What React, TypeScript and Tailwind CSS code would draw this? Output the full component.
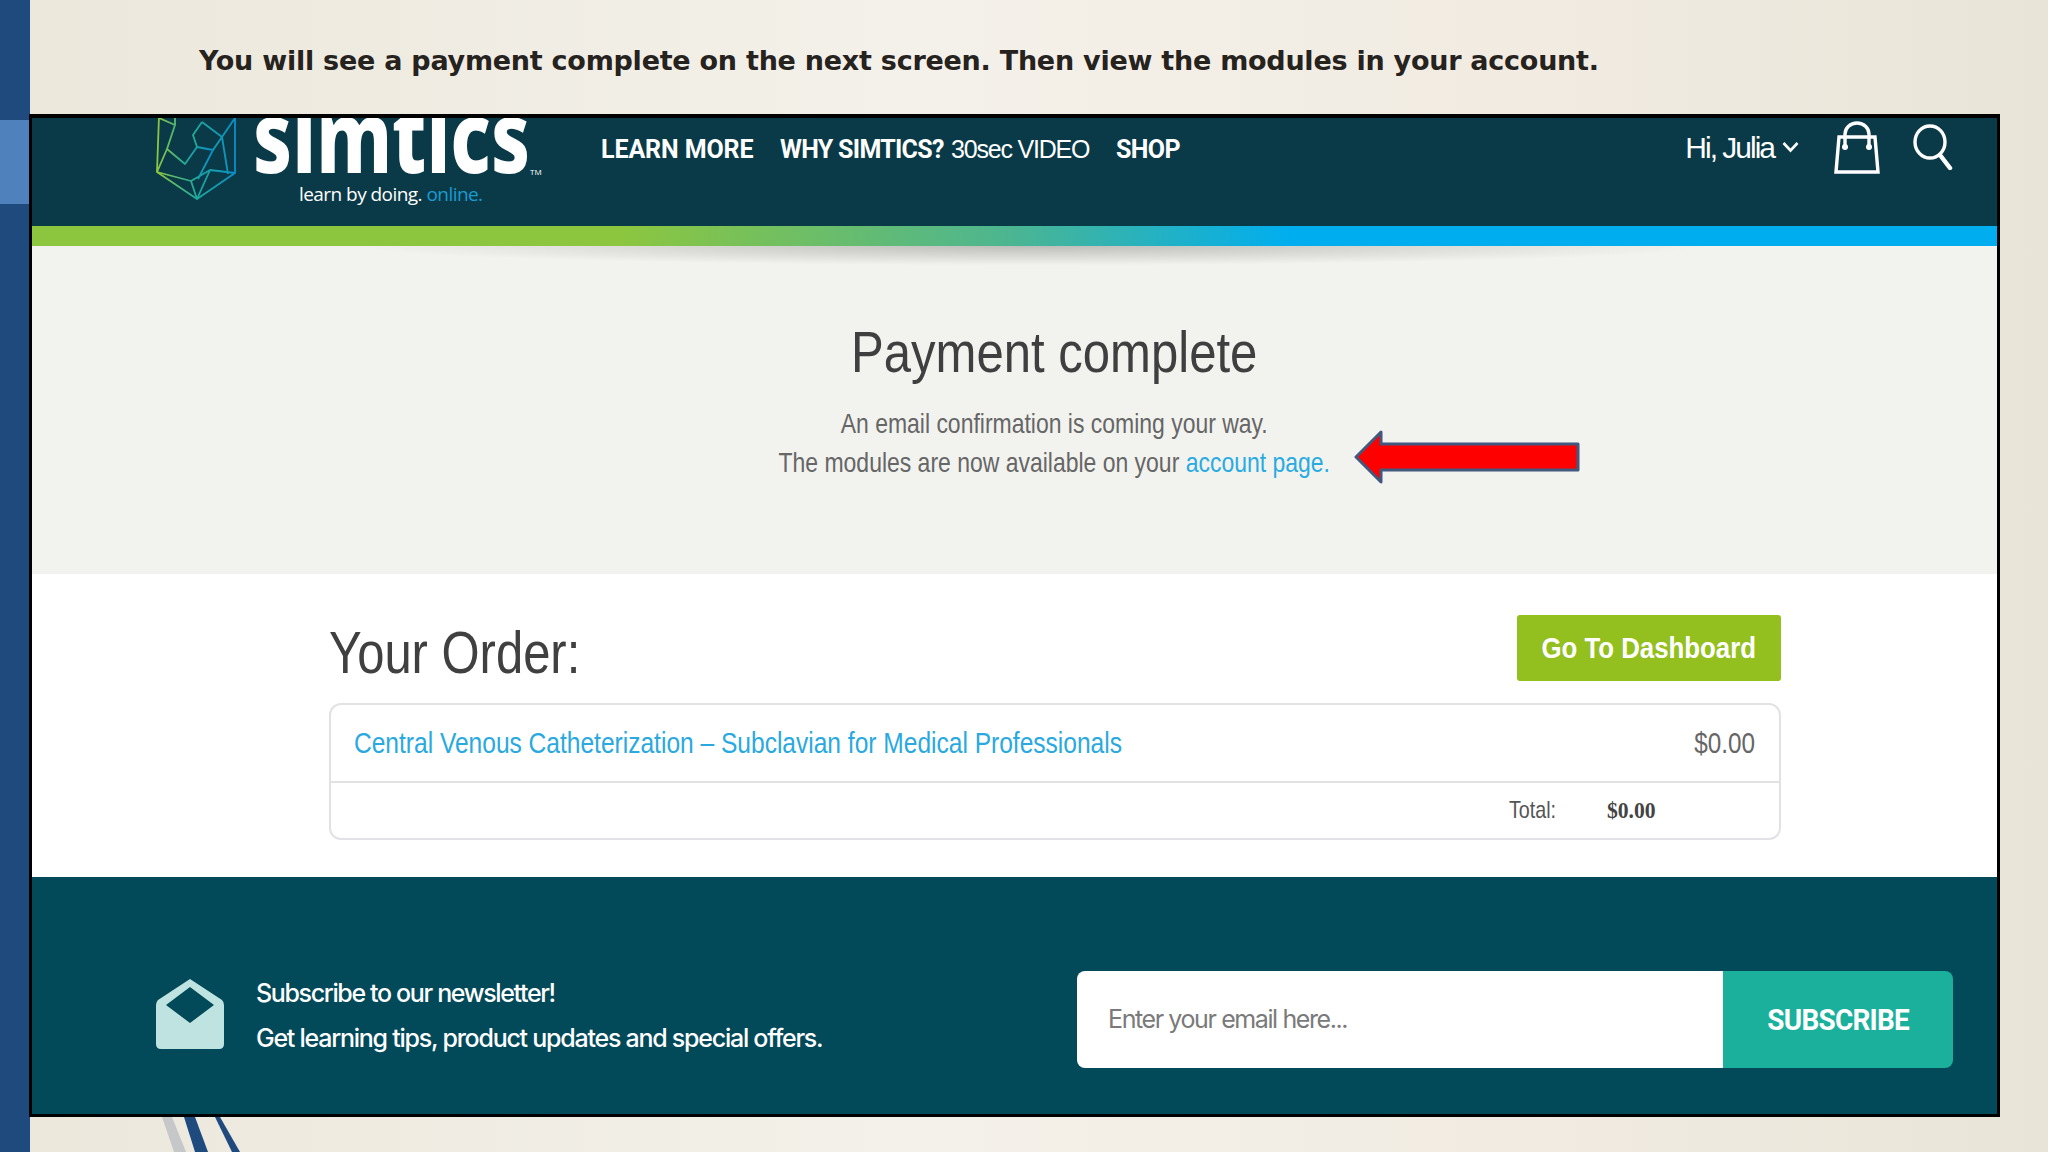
import React from "react";

const arial = "font-['Liberation_Sans',Arial,sans-serif]";

function LogoMark() {
  return (
    <svg width="81" height="82" viewBox="0 0 81 82" fill="none" className="shrink-0">
      <defs>
        <linearGradient id="mark" x1="0" y1="0" x2="1" y2="0">
          <stop offset="0" stopColor="#8cc63f" />
          <stop offset="0.5" stopColor="#1fa89a" />
          <stop offset="1" stopColor="#0a8fc8" />
        </linearGradient>
      </defs>
      <g stroke="url(#mark)" strokeWidth="1.8" strokeLinejoin="round">
        <path d="M3 -2 L1 54 L41 81 L79 55 L79 -2" />
        <path d="M1 54 L35 63 L41 81 M35 63 L54 52 L41 81 M54 52 L79 55" />
        <path d="M3 0 L19 7 L11 31 L29 46 L41 29 L57 32 L42 61" />
        <path d="M19 0 L19 7 M1 54 L11 31 M46 4 L37 17 L41 29 M46 4 L66 19 L57 32 M66 19 L79 0 M66 19 L72 56" />
      </g>
    </svg>
  );
}

function BagIcon() {
  return (
    <svg width="46" height="53" viewBox="0 0 46 53" fill="none" stroke="#fff" strokeWidth="3.4">
      <path d="M2 51 L5 16 H41 L44 51 Z" />
      <path d="M11 25 V13 a12 11 0 0 1 24 0 V25" />
      <circle cx="11" cy="26" r="3" fill="#fff" stroke="none" />
      <circle cx="35" cy="26" r="3" fill="#fff" stroke="none" />
    </svg>
  );
}

function SearchIcon() {
  return (
    <svg width="40" height="46" viewBox="0 0 40 46" fill="none" stroke="#fff" strokeWidth="3.4" strokeLinecap="round">
      <ellipse cx="17" cy="18" rx="15" ry="16" />
      <path d="M27 31 L37 44" strokeWidth="4.5" />
    </svg>
  );
}

function MailIcon() {
  return (
    <svg width="68" height="70" viewBox="0 0 68 70" className="shrink-0">
      <path
        fillRule="evenodd"
        fill="#bfe3e0"
        d="M34 0 L66 21 Q68 23 68 26 V65 Q68 70 63 70 H5 Q0 70 0 65 V26 Q0 23 2 21 Z M34 8 L10 26 L34 44 L58 26 Z"
      />
    </svg>
  );
}

export default function App() {
  return (
    <div className="w-[2048px] h-[1152px] overflow-hidden flex bg-[linear-gradient(90deg,#ebe7db_0%,#f4f1ea_45%,#f1ebe1_75%,#e8e5d8_100%)]">
      <div className="w-[30px] shrink-0 bg-[#1f4a7e] pt-[120px]">
        <div className="h-[84px] bg-[#4f81bd]" />
      </div>

      <div className="relative flex-1 flex flex-col">
        <div className="h-[114px] pl-[169px] pt-[41px]">
          <p className="font-['DejaVu_Sans',Verdana,sans-serif] font-bold text-[27px] leading-[40px] text-[#26221e] tracking-[-0.25px] whitespace-nowrap">
            You will see a payment complete on the next screen. Then view the modules in your account.
          </p>
        </div>

        <div className="relative -ml-px w-[1971px] h-[1003px] border-[3px] border-t-4 border-black flex flex-col">
          {/* site header */}
          <header className="h-[108px] bg-[#0a3a48] flex items-start overflow-hidden text-white">
            <div className="w-[569px] pl-[124px] flex gap-[16px] shrink-0">
              <LogoMark />
              <div className="relative">
                <div className="h-[55px] font-['Noto_Sans',sans-serif] font-extrabold text-[100px] leading-[32px] origin-left scale-x-[0.77] whitespace-nowrap">
                  simtics
                </div>
                <span className="absolute left-[277px] top-[49px] text-[8px] leading-[10px] font-['Open_Sans',sans-serif]">TM</span>
                <div className="pl-[46px] mt-[8px] font-['Open_Sans',sans-serif] text-[19px] leading-[26px] tracking-[-0.55px] whitespace-nowrap">
                  learn by doing. <span className="text-[#1b9ad1]">online.</span>
                </div>
              </div>
            </div>
            <nav className="flex items-center h-[64px] font-['Roboto',sans-serif] text-[25px] flex-1 whitespace-nowrap">
              <span className="font-bold tracking-[-0.1px] w-[179px]">LEARN MORE</span>
              <span className="font-bold tracking-[-0.7px] w-[171px]">WHY SIMTICS?</span>
              <span className={`${arial} tracking-[-1.2px] w-[165px]`}>30sec VIDEO</span>
              <span className="font-bold tracking-[-0.6px]">SHOP</span>
            </nav>
            <div className="flex items-start pr-[44px] shrink-0">
              <div className={`${arial} flex items-center h-[58px] text-[30px] tracking-[-2px] mr-[35px] whitespace-nowrap`}>
                Hi, Julia
                <svg width="17" height="12" viewBox="0 0 17 12" fill="none" stroke="#fff" strokeWidth="2.6" className="ml-[8px]">
                  <path d="M1.5 2 L8.5 9.5 L15.5 2" />
                </svg>
              </div>
              <div className="pt-[3px] mr-[33px]"><BagIcon /></div>
              <div className="pt-[6px]"><SearchIcon /></div>
            </div>
          </header>

          <div className="h-[20px] bg-[linear-gradient(90deg,#8cc63f_0%,#8cc63f_30%,#4bb592_50%,#00aeef_64%,#00aeef_100%)]" />

          {/* payment complete */}
          <section className="relative h-[328px] bg-[#f2f3ef] flex flex-col items-center pl-[79px] pt-[75px]">
            <div className="absolute left-[300px] top-0 h-[20px] w-[1400px] bg-[radial-gradient(ellipse_at_top,#bdbdb9_0%,#f2f3ef_68%)]" />
            <h1 className={`${arial} relative text-[58px] leading-[62px] text-[#3f3f3f] scale-x-[0.846] whitespace-nowrap`}>Payment complete</h1>
            <p className={`${arial} mt-[21px] text-[28px] leading-[39px] text-[#666] text-center scale-x-[0.82] whitespace-nowrap`}>
              An email confirmation is coming your way.
              <br />
              The modules are now available on your <span className="text-[#29abe2]">account page.</span>
            </p>
          </section>

          {/* order */}
          <section className="h-[303px] bg-white pl-[297px] pr-[216px] pt-[41px]">
            <div className="flex justify-between items-start h-[88px]">
              <h2 className={`${arial} mt-[6px] text-[60px] leading-[64px] text-[#404040] origin-left scale-x-[0.816] whitespace-nowrap`}>Your Order:</h2>
              <button className={`${arial} w-[264px] h-[66px] rounded-[3px] bg-[#93c01f] text-white font-bold text-[30px] pb-[2px] whitespace-nowrap`}>
                <span className="inline-block scale-x-[0.86]">Go To Dashboard</span>
              </button>
            </div>
            <div className="h-[137px] rounded-xl border-2 border-[#e2e2e6] flex flex-col">
              <div className={`${arial} h-[78px] shrink-0 border-b-2 border-[#e2e2e6] flex items-center justify-between pl-[23px] pr-[24px] text-[30px] pb-[2px]`}>
                <span className="text-[#29a9e0] origin-left scale-x-[0.818] whitespace-nowrap">Central Venous Catheterization – Subclavian for Medical Professionals</span>
                <span className="text-[#666] origin-right scale-x-[0.81]">$0.00</span>
              </div>
              <div className={`${arial} flex-1 flex items-center pl-[1178px] pb-[2px] text-[#555] text-[24px]`}>
                <span className="w-[98px] origin-left scale-x-[0.82]">Total:</span>
                <span className="font-['Liberation_Serif',serif] font-bold text-[#444] origin-left scale-x-[0.9]">$0.00</span>
              </div>
            </div>
          </section>

          {/* newsletter */}
          <footer className="flex-1 bg-[#024a59] flex items-start justify-between pl-[124px] pr-[44px] pt-[94px] text-white">
            <div className="flex items-start gap-[32px] mt-[8px]">
              <MailIcon />
              <div className="font-['Inter',sans-serif] font-medium text-[25px] leading-[45px] -mt-[8px] tracking-[-1.25px] whitespace-nowrap">
                <div className="tracking-[-1.35px]">Subscribe to our newsletter!</div>
                <div>Get learning tips, product updates and special offers.</div>
              </div>
            </div>
            <div className="flex w-[876px] h-[97px] rounded-lg overflow-hidden">
              <div className="w-[646px] bg-white pl-[31px] flex items-center font-['Inter',sans-serif] text-[25px] tracking-[-1.4px] text-[#7a7a7a]">
                Enter your email here...
              </div>
              <button className="flex-1 bg-[#1bb09c] font-['Roboto',sans-serif] font-bold text-[30px] tracking-[-0.8px] text-white">
                <span className="inline-block scale-x-[0.93]">SUBSCRIBE</span>
              </button>
            </div>
          </footer>

          {/* red pointer drawn over the page */}
          <svg width="226" height="54" viewBox="0 0 226 54" className="absolute left-[1322px] top-[312px]">
            <path d="M2 27 L27 2 V14 H224 V40 H27 V52 Z" fill="#ff0000" stroke="#41587f" strokeWidth="3" strokeLinejoin="round" />
          </svg>
        </div>

        {/* slide stripes under the frame */}
        <svg width="90" height="35" viewBox="0 0 90 35" className="absolute left-[130px] top-[1117px]">
          <polygon points="2,0 12,0 26,35 14,35" fill="#c5c7c9" />
          <polygon points="24,0 35,0 48,35 35,35" fill="#1f4a7e" />
          <polygon points="55,0 60,0 80,35 72,35" fill="#1f4a7e" />
        </svg>
      </div>
    </div>
  );
}
